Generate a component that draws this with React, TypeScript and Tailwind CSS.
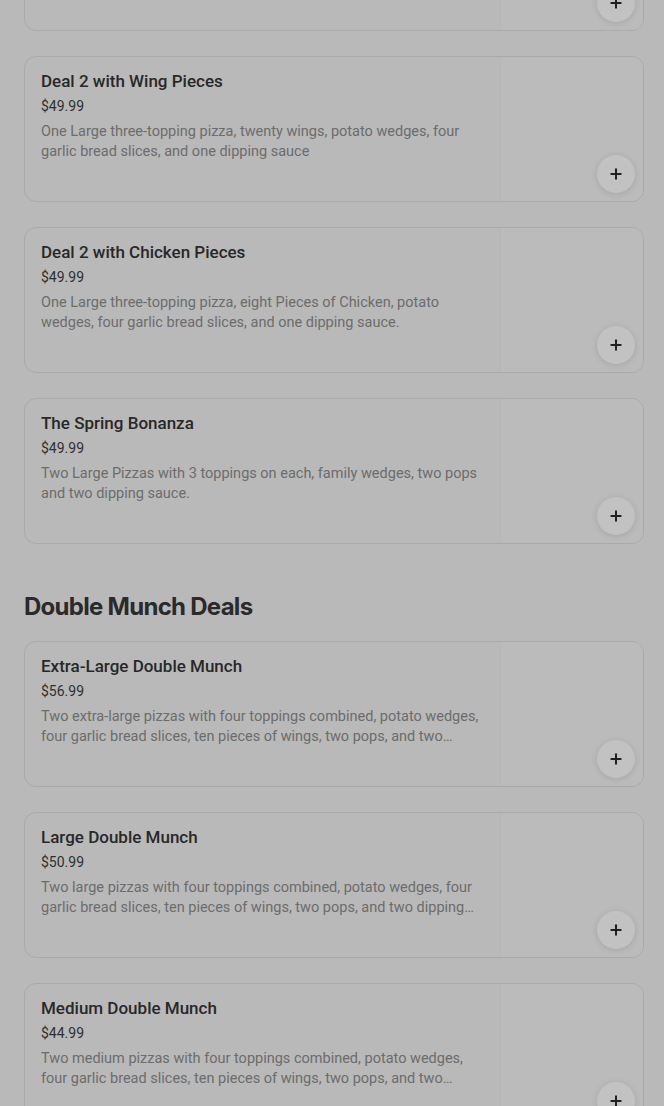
import { Plus } from "lucide-react";

type Deal = { title: string; price: string; description: string };

const topDeals: Deal[] = [
  { title: "Deal 1", price: "$39.99", description: "" },
  {
    title: "Deal 2 with Wing Pieces",
    price: "$49.99",
    description: "One Large three-topping pizza, twenty wings, potato wedges, four garlic bread slices, and one dipping sauce",
  },
  {
    title: "Deal 2 with Chicken Pieces",
    price: "$49.99",
    description: "One Large three-topping pizza, eight Pieces of Chicken, potato wedges, four garlic bread slices, and one dipping sauce.",
  },
  {
    title: "The Spring Bonanza",
    price: "$49.99",
    description: "Two Large Pizzas with 3 toppings on each, family wedges, two pops and two dipping sauce.",
  },
];

const munchDeals: Deal[] = [
  {
    title: "Extra-Large Double Munch",
    price: "$56.99",
    description: "Two extra-large pizzas with four toppings combined, potato wedges, four garlic bread slices, ten pieces of wings, two pops, and two dipping sauces.",
  },
  {
    title: "Large Double Munch",
    price: "$50.99",
    description: "Two large pizzas with four toppings combined, potato wedges, four garlic bread slices, ten pieces of wings, two pops, and two dipping sauces.",
  },
  {
    title: "Medium Double Munch",
    price: "$44.99",
    description: "Two medium pizzas with four toppings combined, potato wedges, four garlic bread slices, ten pieces of wings, two pops, and two dipping sauces.",
  },
];

function DealCard({ deal }: { deal: Deal }) {
  return (
    <article className="flex h-[146px] overflow-hidden rounded-xl border border-[#a9a9a9] bg-[#b9b9b9] font-['Roboto',sans-serif]">
      <div className="min-w-0 flex-1 pl-4 pr-[14px] pt-3">
        <h3 className="text-[17px] font-medium leading-6 text-[#282828]">{deal.title}</h3>
        <p className="mt-[3px] text-sm leading-5 text-[#303030]">{deal.price}</p>
        <p className="mt-[6px] line-clamp-2 text-[14.5px] leading-5 text-[#6c6c6c]">{deal.description}</p>
      </div>
      <div className="relative w-[143px] shrink-0 border-l border-[#b6b6b6] bg-[#bbbbbb]">
        <button className="absolute bottom-[8px] right-[8px] flex h-[38px] w-[38px] items-center justify-center rounded-full bg-[#c2c2c2] shadow-[0_1px_6px_rgba(0,0,0,0.12)]">
          <Plus size={16} strokeWidth={3} className="text-[#1f1f1f]" />
        </button>
      </div>
    </article>
  );
}

export default function App() {
  return (
    <div className="h-[1106px] overflow-hidden bg-[#b9b9b9] pl-6 pr-5 font-['Inter',sans-serif]">
      <section className="-mt-[115px] flex flex-col gap-[25px]">
        {topDeals.map((deal) => (
          <DealCard key={deal.title} deal={deal} />
        ))}
      </section>
      <h2 className="mt-[47px] text-2xl font-bold leading-8 tracking-[-0.03em] text-[#2a2a2a]">Double Munch Deals</h2>
      <section className="mt-[18px] flex flex-col gap-[25px]">
        {munchDeals.map((deal) => (
          <DealCard key={deal.title} deal={deal} />
        ))}
      </section>
    </div>
  );
}
